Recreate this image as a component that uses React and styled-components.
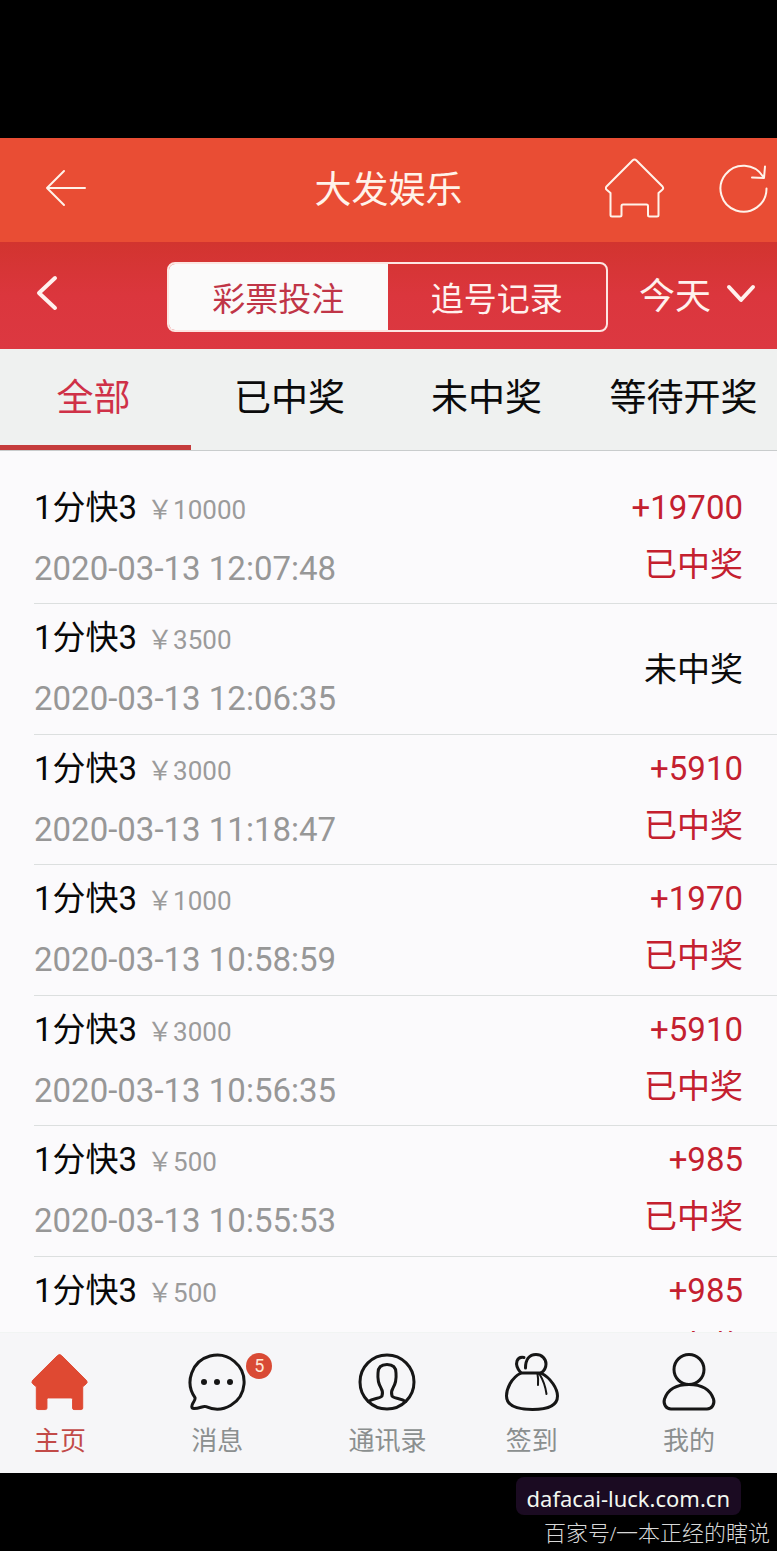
import React, { useState } from 'react';
import styled, { createGlobalStyle } from 'styled-components';

const GlobalStyle = createGlobalStyle`
  *, *::before, *::after {
    box-sizing: border-box;
  }

  body {
    margin: 0;
    background: #000000;
    font-family: Roboto, "Noto Sans CJK SC", sans-serif;
  }

  button, select {
    margin: 0;
    padding: 0;
    border: 0;
    background: none;
    color: inherit;
    font: inherit;
    cursor: pointer;
  }
`;

const Page = styled.div`
  display: flex;
  flex-direction: column;
  height: 100vh;
  padding-top: 138px;
`;

const TitleBar = styled.header`
  display: grid;
  grid-template-columns: 172px 1fr 172px;
  align-items: center;
  flex-shrink: 0;
  height: 104px;
  padding-bottom: 4px;
  color: #fff3ea;
  background: #e94d34;
`;

const Title = styled.h1`
  margin: 0;
  padding-top: 6px;
  font-size: 37px;
  font-weight: 400;
  line-height: 48px;
  text-align: center;
`;

const IconButton = styled.button`
  display: flex;
  justify-self: start;
  margin-left: ${({ $inset }) => $inset || 0}px;
`;

const Actions = styled.div`
  display: flex;
  align-items: center;
  justify-content: space-between;
  padding-right: 9px;
`;

const FilterBar = styled.div`
  display: grid;
  grid-template-columns: 167px 1fr 169px;
  align-items: center;
  flex-shrink: 0;
  height: 107px;
  padding-bottom: 6px;
  color: #fff1ee;
  background: linear-gradient(#d2342f, #db363d 50%, #dc3841);
`;

const Segmented = styled.div`
  display: flex;
  height: 70px;
  margin-top: 8px;
  border: 2px solid #fde6e2;
  border-radius: 8px;
  overflow: hidden;
`;

const Segment = styled.button`
  flex: 1;
  padding-top: 6px;
  font-size: 33px;
  line-height: 48px;
  color: ${({ $active }) => ($active ? '#c03547' : '#fff1ee')};
  background: ${({ $active }) => ($active ? '#fbfafa' : 'transparent')};
`;

const DayPicker = styled.label`
  display: flex;
  align-items: center;
  gap: 14px;
  padding: 2px 0 0 31px;
`;

const DaySelect = styled.select`
  padding-top: 6px;
  appearance: none;
  font-size: 36px;
  line-height: 48px;
  outline: none;

  option {
    color: #111111;
  }
`;

const TabStrip = styled.nav`
  display: flex;
  flex-shrink: 0;
  height: 102px;
  border-bottom: 1px solid #c9cccd;
  background: #eff1f0;
  overflow: hidden;
`;

const Tab = styled.button`
  flex: 0 0 ${({ $active }) => ($active ? '191px' : '197px')};
  border-bottom: 5px solid ${({ $active }) => ($active ? '#c53c3c' : 'transparent')};
  padding-top: 3px;
  padding-right: ${({ $active }) => ($active ? '4px' : '0')};
  font-size: 37px;
  line-height: 48px;
  white-space: nowrap;
  color: ${({ $active }) => ($active ? '#cf3148' : '#0b0b0b')};
`;

const RecordList = styled.ul`
  flex: 1 1 0;
  min-height: 0;
  margin: 0;
  padding: 23px 0 0 34px;
  list-style: none;
  background: #fbfafc;
  overflow-y: auto;
  scrollbar-width: none;
`;

const RecordRow = styled.li`
  display: flex;
  justify-content: space-between;
  height: 130px;
  padding: 10px 34px 8px 0;
  border-bottom: 1px solid #dcdfdf;
  line-height: 48px;

  &:nth-child(even) {
    height: 131px;
  }
`;

const Game = styled.div`
  font-size: 33px;
  color: #080808;
`;

const Stake = styled.span`
  margin-left: 10px;
  font-size: 26px;
  color: #9b9b9b;
`;

const Time = styled.time`
  display: block;
  margin-top: 11px;
  font-size: 33px;
  color: #979797;
`;

const Result = styled.div`
  display: flex;
  flex-direction: column;
  align-self: ${({ $win }) => ($win ? 'flex-start' : 'center')};
  gap: 9px;
  font-size: 33px;
  text-align: right;
  color: ${({ $win }) => ($win ? '#c4202f' : '#0b0b0b')};
`;

const BottomNav = styled.nav`
  display: grid;
  grid-template-columns: repeat(4, 1fr) auto;
  justify-items: start;
  flex-shrink: 0;
  height: 141px;
  padding: 20px 62px 0 34px;
  border-top: 1px solid #f1f4f3;
  background: #f6f6f8;
`;

const NavLink = styled.a`
  position: relative;
  display: flex;
  flex-direction: column;
  align-items: center;
  min-width: 52px;
  color: ${({ $active }) => ($active ? '#c24a48' : '#8b8f8f')};
  font-size: 26px;
  line-height: 36px;
  text-decoration: none;
  white-space: nowrap;

  svg {
    margin: 0 -3px 12px;
    color: ${({ $active }) => ($active ? '#df4932' : '#161616')};
  }
`;

const Badge = styled.span`
  position: absolute;
  top: 0;
  left: 55px;
  width: 26px;
  height: 26px;
  border-radius: 50%;
  font-size: 18px;
  line-height: 26px;
  text-align: center;
  color: #ffe9d8;
  background: #d94a35;
`;

const Footer = styled.footer`
  display: flex;
  flex-direction: column;
  align-items: flex-end;
  flex-shrink: 0;
  height: 78px;
  padding-top: 4px;
`;

const Domain = styled.div`
  height: 38px;
  margin-right: 36px;
  padding: 0 11px;
  border-radius: 8px;
  font-family: "Noto Sans", sans-serif;
  font-size: 22px;
  line-height: 42px;
  color: #f2f7f0;
  background: #1b0b22;
`;

const Credit = styled.div`
  margin-right: 7px;
  font-family: "Liberation Serif", "Noto Sans CJK SC", serif;
  font-size: 22px;
  font-weight: 300;
  line-height: 38px;
  color: #d8d8d8;
`;

const HOUSE =
  'M27.5 2.5Q29.5 .5 31.5 2.5L57.5 28.5Q59 30.5 57 32L53.5 35V57Q53.5 58.5 52 58.5H44.5Q43 58.5 43 57V48Q43 46.5 41.5 46.5H18Q16.5 46.5 16.5 48V57Q16.5 58.5 15 58.5H7Q5.5 58.5 5.5 57V35L2 32Q0 30.5 1.5 28.5Z';

function Icon({ width = 58, height = width, stroke = 3, children, ...rest }) {
  return (
    <svg
      width={width}
      height={height}
      viewBox={`0 0 ${width} ${height}`}
      fill="none"
      stroke="currentColor"
      strokeWidth={stroke}
      strokeLinecap="round"
      strokeLinejoin="round"
      aria-hidden="true"
      {...rest}
    >
      {children}
    </svg>
  );
}

const HomeSolid = () => (
  <Icon viewBox="0 0 60 60" stroke={1}>
    <path d={HOUSE} fill="currentColor" />
  </Icon>
);

const ChatIcon = () => (
  <Icon>
    <path d="M7 44.6A27 27 0 1 1 18 53.7C15 52.5 12 55.5 6 55.5C3 55.5 3.5 52.5 5 50C6.5 47.5 7.5 46.5 7 44.6Z" />
    <g fill="currentColor" stroke="none">
      <circle cx="16" cy="29" r="3" />
      <circle cx="29" cy="29" r="3" />
      <circle cx="42" cy="29" r="3" />
    </g>
  </Icon>
);

const ContactsIcon = () => (
  <Icon>
    <circle cx="29" cy="29" r="27" />
    <path d="M10.5 48.5C15 45 22 46 24 43C25 40 24.5 37.5 23 35C20 30 19.5 26 20 20C20 14 23 11.5 29 11.5C35 11.5 38 14 38 20C38.5 26 38 30 35 35C33.5 37.5 33 40 34 43C36 46 43 45 47.5 48.5" />
  </Icon>
);

const BagIcon = () => (
  <Icon>
    <path d="M18 20H38C48 25 54.5 36 54.5 43C54.5 53 45 56.5 29.5 56.5C13 56.5 3.5 53 3.5 43C3.5 36 8 25 18 20Z" />
    <path d="M18 20C13.5 15 13 11 14 8C15 5 18 4 21 4.5M22.5 15C22.5 7 26 1.5 33 1.5C39 1.5 43 6 43 11C43 15 41 18 38 20" />
    <path d="M34.5 21Q35.5 26 35 32M36.5 21Q42 30 43.5 41" strokeWidth="2" />
  </Icon>
);

const ProfileIcon = () => (
  <Icon>
    <circle cx="29" cy="16.5" r="15" />
    <path d="M11 56H47C52 56 55 51 53.5 46C50 36 41 31.5 29 31.5C17 31.5 8 36 4.5 46C3 51 6 56 11 56Z" />
  </Icon>
);

const TABS = ['全部', '已中奖', '未中奖', '等待开奖'];

const RECORDS = [
  { stake: 10000, time: '2020-03-13 12:07:48', win: 19700 },
  { stake: 3500, time: '2020-03-13 12:06:35', win: 0 },
  { stake: 3000, time: '2020-03-13 11:18:47', win: 5910 },
  { stake: 1000, time: '2020-03-13 10:58:59', win: 1970 },
  { stake: 3000, time: '2020-03-13 10:56:35', win: 5910 },
  { stake: 500, time: '2020-03-13 10:55:53', win: 985 },
  { stake: 500, time: '', win: 985 },
];

const NAV = [
  { label: '主页', icon: HomeSolid, active: true },
  { label: '消息', icon: ChatIcon, count: 5 },
  { label: '通讯录', icon: ContactsIcon },
  { label: '签到', icon: BagIcon },
  { label: '我的', icon: ProfileIcon },
];

function Record({ stake, time, win }) {
  return (
    <RecordRow>
      <div>
        <Game>
          1分快3<Stake>￥{stake}</Stake>
        </Game>
        {time && <Time>{time}</Time>}
      </div>
      <Result $win={win > 0}>
        {win > 0 && <span>+{win}</span>}
        <span>{win > 0 ? '已中奖' : '未中奖'}</span>
      </Result>
    </RecordRow>
  );
}

export default function App() {
  const [segment, setSegment] = useState('彩票投注');
  const [tab, setTab] = useState(TABS[0]);

  return (
    <Page>
      <GlobalStyle />
      <TitleBar>
        <IconButton type="button" aria-label="返回" $inset={45}>
          <Icon width={42} height={38} stroke={2}>
            <path d="M19 2L2 19L19 36M2 19H40" />
          </Icon>
        </IconButton>
        <Title>大发娱乐</Title>
        <Actions>
          <IconButton type="button" aria-label="主页">
            <Icon width={60} stroke={2}>
              <path d={HOUSE} />
            </Icon>
          </IconButton>
          <IconButton type="button" aria-label="刷新">
            <Icon width={50} stroke={2}>
              <path d="M48.5 25.5A23 23 0 1 1 45 13.5M47 3.5L46 15L34 14.5" />
            </Icon>
          </IconButton>
        </Actions>
      </TitleBar>

      <FilterBar>
        <IconButton type="button" aria-label="返回" $inset={35}>
          <Icon width={24} height={36} stroke={4}>
            <path d="M20 3L4 18L20 33" />
          </Icon>
        </IconButton>
        <Segmented>
          {['彩票投注', '追号记录'].map((name) => (
            <Segment
              key={name}
              type="button"
              $active={name === segment}
              onClick={() => setSegment(name)}
            >
              {name}
            </Segment>
          ))}
        </Segmented>
        <DayPicker>
          <DaySelect aria-label="日期">
            <option>今天</option>
          </DaySelect>
          <Icon width={30} height={20} stroke={4}>
            <path d="M3 3L15 16L27 3" />
          </Icon>
        </DayPicker>
      </FilterBar>

      <TabStrip>
        {TABS.map((name) => (
          <Tab key={name} type="button" $active={name === tab} onClick={() => setTab(name)}>
            {name}
          </Tab>
        ))}
      </TabStrip>

      <RecordList>
        {RECORDS.map((record, index) => (
          <Record key={index} {...record} />
        ))}
      </RecordList>

      <BottomNav>
        {NAV.map(({ label, icon: NavIcon, active, count }) => (
          <NavLink key={label} href="#" $active={active}>
            <NavIcon />
            {label}
            {count && <Badge>{count}</Badge>}
          </NavLink>
        ))}
      </BottomNav>

      <Footer>
        <Domain>dafacai-luck.com.cn</Domain>
        <Credit>百家号/一本正经的瞎说</Credit>
      </Footer>
    </Page>
  );
}
